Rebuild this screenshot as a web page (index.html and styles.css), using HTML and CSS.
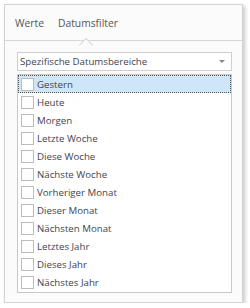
FILE: index.html
```html
<!DOCTYPE html>
<html lang="de">

<head>
    <meta charset="UTF-8">
    <title>Datumsfilter</title>
    <link rel="stylesheet" href="styles.css">
</head>

<body>
    <div class="panel">
        <div class="tabs">
            <span class="tab">Werte</span>
            <span class="tab active">Datumsfilter</span>
        </div>

        <div class="content">
            <div class="combo">
                <span>Spezifische Datumsbereiche</span>
                <span class="arrow"></span>
            </div>

            <div class="list">
                <div class="row selected"><span class="check"></span>Gestern</div>
                <div class="row"><span class="check"></span>Heute</div>
                <div class="row"><span class="check"></span>Morgen</div>
                <div class="row"><span class="check"></span>Letzte Woche</div>
                <div class="row"><span class="check"></span>Diese Woche</div>
                <div class="row"><span class="check"></span>Nächste Woche</div>
                <div class="row"><span class="check"></span>Vorheriger Monat</div>
                <div class="row"><span class="check"></span>Dieser Monat</div>
                <div class="row"><span class="check"></span>Nächsten Monat</div>
                <div class="row"><span class="check"></span>Letztes Jahr</div>
                <div class="row"><span class="check"></span>Dieses Jahr</div>
                <div class="row"><span class="check"></span>Nächstes Jahr</div>
            </div>
        </div>
    </div>
</body>

</html>
```

FILE: styles.css
```css
body {
    margin: 0;
    background-color: #ffffff;
    font-family: "Open Sans", "Noto Sans", sans-serif;
    font-size: 9.7px;
    color: #434350;
}

.panel {
    box-sizing: border-box;
    width: 239px;
    height: 299px;
    margin: 4px 0 0 4px;
    background-color: #fbfbfb;
    border: 1px solid #d4d4d4;
    box-shadow: 2px 2px 4px rgba(0, 0, 0, 0.22);
}

.tabs {
    position: relative;
    display: flex;
    align-items: center;
    gap: 14px;
    height: 35px;
    padding-left: 10px;
    border-bottom: 1px solid #d6d6d6;
    font-size: 10.3px;
    color: #555555;
}

.tab.active {
    position: relative;
}

.tab.active::after {
    content: "";
    position: absolute;
    left: 23px;
    top: 24px;
    width: 9px;
    height: 9px;
    background-color: #fbfbfb;
    border-left: 1px solid #d6d6d6;
    border-top: 1px solid #d6d6d6;
    transform: rotate(45deg);
}

.content {
    padding: 11px 10px 0 12px;
}

.combo {
    box-sizing: border-box;
    display: flex;
    align-items: center;
    justify-content: space-between;
    height: 19px;
    padding: 0 6px 0 2px;
    background-color: #ffffff;
    border: 1px solid #cfcfcf;
}

.arrow {
    width: 0;
    height: 0;
    border-left: 3px solid transparent;
    border-right: 3px solid transparent;
    border-top: 3px solid #888888;
}

.list {
    box-sizing: border-box;
    height: 219px;
    margin-top: 3px;
    background-color: #ffffff;
    border: 1px solid #c8c8c8;
}

.row {
    box-sizing: border-box;
    display: flex;
    align-items: center;
    gap: 3px;
    height: 18px;
    padding-left: 3px;
}

.row.selected {
    background-color: #cde6f8;
    border: 1px dotted #555555;
    padding-left: 2px;
}

.check {
    box-sizing: border-box;
    width: 13px;
    height: 13px;
    background-color: #ffffff;
    border: 1px solid #bcbcbc;
}
```
